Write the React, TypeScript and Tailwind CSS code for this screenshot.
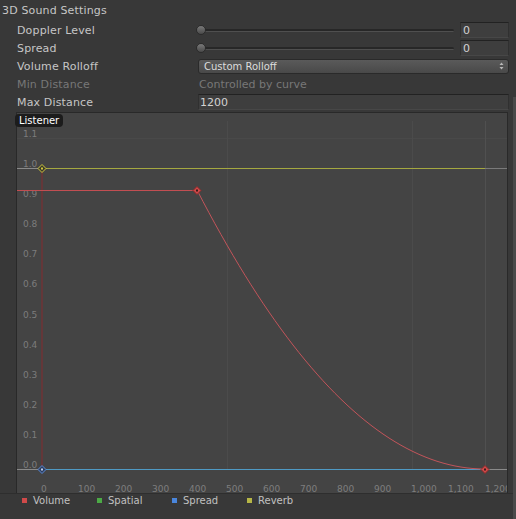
import React from 'react';

// curve editor scale: 37px per 100 units of distance, 301px per 1.0 of value
const X0 = 25;
const Y0 = 356;
const xs = (d: number) => X0 + d * 0.37;
const ys = (v: number) => Y0 - v * 301;

const MAX_X = xs(1200) - 1;
const KNEE_X = 180;
const FLAT_Y = 77;
const W = 490;

const rolloffPath = (() => {
  const pts: string[] = [];
  for (let i = 0; i <= 48; i++) {
    const t = i / 48;
    const x = KNEE_X + (MAX_X - KNEE_X) * t;
    const y = FLAT_Y + (Y0 - FLAT_Y) * (1 - (1 - t) * (1 - t));
    pts.push(`${i === 0 ? 'M' : 'L'}${x.toFixed(2)} ${y.toFixed(2)}`);
  }
  return pts.join(' ');
})();

const Diamond = ({ x, y, fill, stroke, dot }: { x: number; y: number; fill: string; stroke: string; dot: string }) => (
  <g>
    <polygon points={`${x},${y - 4} ${x + 4},${y} ${x},${y + 4} ${x - 4},${y}`} fill={fill} stroke={stroke} strokeWidth={1} />
    <rect x={x - 1} y={y - 1} width={2} height={2} fill={dot} />
  </g>
);

const Row: React.FC<{ label: string; dim?: boolean; children: React.ReactNode }> = ({ label, dim, children }) => (
  <div className="flex h-[18px] items-center">
    <div className={`w-[198px] shrink-0 pl-[17px] tracking-[0.15px] ${dim ? 'text-[#777777]' : 'text-[#c6c6c6]'}`}>{label}</div>
    <div className="flex w-[311px] items-center">{children}</div>
  </div>
);

const NumberField = ({ value }: { value: string }) => (
  <div className="flex h-[16px] w-[49px] items-center border border-t-[#222222] border-x-[#303030] border-b-[#474747] bg-[#3e3e3e] pl-[2px] text-[#d2d2d2]">
    {value}
  </div>
);

const Slider = ({ value }: { value: string }) => (
  <>
    <div className="relative mr-[4px] h-[18px] flex-1">
      <div className="absolute left-[2px] right-[2px] top-[8px] h-[3px] rounded-full border-b border-[#4f4f4f] bg-[#272727]" />
      <div className="absolute left-[-2px] top-[4px] h-[10px] w-[10px] rounded-full border border-[#2b2b2b] bg-gradient-to-b from-[#7a7a7a] to-[#4a4a4a]" />
    </div>
    <NumberField value={value} />
  </>
);

const legend = [
  { name: 'Volume', color: 'bg-[#d04a4a]' },
  { name: 'Spatial', color: 'bg-[#4caa46]' },
  { name: 'Spread', color: 'bg-[#4a86dc]' },
  { name: 'Reverb', color: 'bg-[#b6b646]' },
];

const CurveGraph = () => {
  const xTicks = Array.from({ length: 13 }, (_, i) => i * 100);
  const yTicks = Array.from({ length: 12 }, (_, i) => i / 10);
  return (
    <svg width={W} height={380} className="block">
      {/* grid */}
      <line x1={0} y1={ys(1.1) + 0.5} x2={W} y2={ys(1.1) + 0.5} stroke="#4a4a4a" />
      {[500, 1000].map(d => (
        <line key={d} x1={xs(d) + 0.5} y1={8} x2={xs(d) + 0.5} y2={Y0} stroke="#4b4b4b" />
      ))}
      <line x1={MAX_X + 0.5} y1={8} x2={MAX_X + 0.5} y2={Y0} stroke="#505050" />

      {/* axis labels */}
      {yTicks.map(v => (
        <text key={v} x={6} y={ys(v) - 1} fontSize={9} fill="#7c7c7c" fontFamily="DejaVu Sans, sans-serif">
          {v.toFixed(1)}
        </text>
      ))}
      {xTicks.map(d => (
        <text key={d} x={xs(d) - 1} y={379} fontSize={9} fill="#7e7e7e" fontFamily="DejaVu Sans, sans-serif">
          {d.toLocaleString('en-US')}
        </text>
      ))}

      {/* reverb */}
      <line x1={0} y1={ys(1) + 0.5} x2={X0} y2={ys(1) + 0.5} stroke="#8a8a8a" />
      <line x1={X0} y1={ys(1) + 0.5} x2={MAX_X} y2={ys(1) + 0.5} stroke="#a5a840" />
      <line x1={MAX_X} y1={ys(1) + 0.5} x2={W} y2={ys(1) + 0.5} stroke="#7a7a7a" />

      {/* spread */}
      <line x1={0} y1={Y0 + 0.5} x2={X0} y2={Y0 + 0.5} stroke="#8a8a8a" />
      <line x1={X0} y1={Y0 + 0.5} x2={MAX_X} y2={Y0 + 0.5} stroke="#4f9ac4" />
      <line x1={MAX_X} y1={Y0 + 0.5} x2={W} y2={Y0 + 0.5} stroke="#8a8a8a" />

      {/* volume */}
      <line x1={X0} y1={ys(1) + 3} x2={X0} y2={Y0} stroke="#643739" strokeWidth={2} />
      <line x1={0} y1={FLAT_Y + 0.5} x2={KNEE_X} y2={FLAT_Y + 0.5} stroke="#c24e52" />
      <path d={rolloffPath} fill="none" stroke="#c2545a" strokeWidth={1} />

      <Diamond x={X0} y={ys(1) + 0.5} fill="#3a3a2a" stroke="#d2c83e" dot="#d2c83e" />
      <Diamond x={X0} y={Y0 + 0.5} fill="#2e3e5e" stroke="#5a8ad8" dot="#c0d0f0" />
      <Diamond x={KNEE_X} y={FLAT_Y + 0.5} fill="#d04a4a" stroke="#8a2a2a" dot="#3a1a1a" />
      <Diamond x={MAX_X} y={Y0 + 0.5} fill="#d04a4a" stroke="#8a2a2a" dot="#3a1a1a" />
    </svg>
  );
};

export default function App() {
  return (
    <div className="relative h-[519px] w-[516px] overflow-hidden bg-[#383838] font-['DejaVu_Sans',sans-serif] text-[11px] leading-[13px] text-[#c6c6c6]">
      <div className="flex h-[21px] items-center pl-[2px] tracking-[0.15px]">3D Sound Settings</div>

      <Row label="Doppler Level">
        <Slider value="0" />
      </Row>
      <Row label="Spread">
        <Slider value="0" />
      </Row>
      <Row label="Volume Rolloff">
        <div className="flex h-[15px] w-full items-center justify-between rounded-[3px] border border-[#2a2a2a] bg-gradient-to-b from-[#5a5a5a] to-[#494949] pl-[5px] pr-[4px] text-[10px] text-[#dcdcdc]">
          <span>Custom Rolloff</span>
          <svg width={5} height={8} viewBox="0 0 5 8">
            <path d="M2.5 0.5 L4.5 3 L0.5 3 Z" fill="#b8b8b8" />
            <path d="M2.5 7.5 L4.5 5 L0.5 5 Z" fill="#b8b8b8" />
          </svg>
        </div>
      </Row>
      <Row label="Min Distance" dim>
        <span className="pl-[1px] text-[#777777]">Controlled by curve</span>
      </Row>
      <Row label="Max Distance">
        <div className="flex h-[16px] w-full items-center border border-t-[#222222] border-x-[#303030] border-b-[#474747] bg-[#3e3e3e] pl-[1px] text-[#d2d2d2]">
          1200
        </div>
      </Row>

      <div className="relative mt-[1px] ml-[16px] h-[381px] w-[492px] border-l border-t border-r border-[#292929] bg-[#444444]">
        <CurveGraph />
        <div className="absolute left-[-2px] top-[1px] flex h-[13px] items-center rounded-[4px] bg-[#1c1c1c] px-[4px] text-[10px] text-white">
          Listener
        </div>
      </div>

      <div className="flex h-[14px] items-center border-t border-[#2e2e2e] pl-[22px] text-[10px] text-[#c0c0c0]">
        {legend.map(l => (
          <div key={l.name} className="flex w-[75px] items-center gap-[6px]">
            <div className={`h-[5px] w-[5px] ${l.color}`} />
            <span>{l.name}</span>
          </div>
        ))}
      </div>

      {/* scrollbar track */}
      <div className="absolute right-0 top-[97px] bottom-0 w-[3px] bg-[#4a4a4a]" />
    </div>
  );
}
